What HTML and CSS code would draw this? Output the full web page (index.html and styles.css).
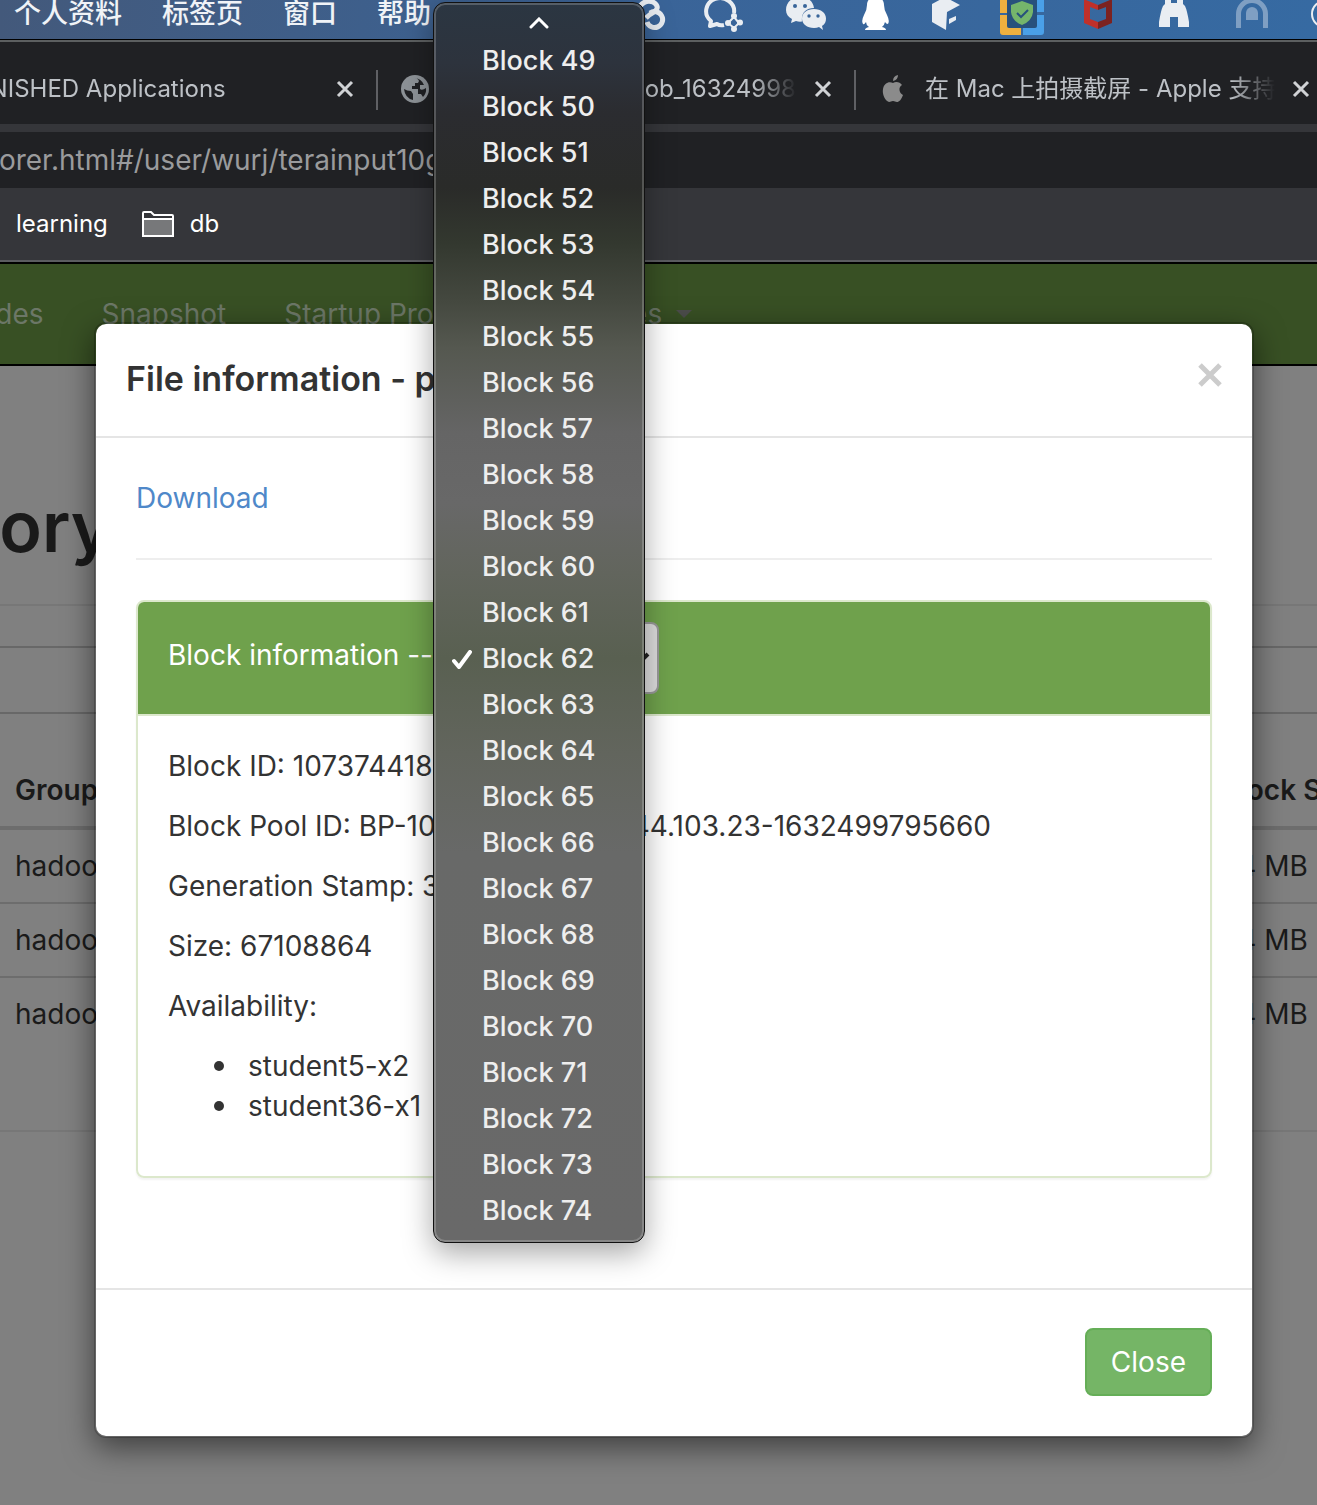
FILE: index.html
```html
<!DOCTYPE html>
<html lang="zh-CN">
<head>
<meta charset="utf-8">
<meta name="viewport" content="width=device-width, initial-scale=1">
<title>Browsing HDFS</title>
<link rel="stylesheet" href="styles.css">
</head>
<body>
<div class="screen">
  <header class="menubar">
    <nav class="menubar-menus">
      <span>个人资料</span><span>标签页</span><span>窗口</span><span>帮助</span>
    </nav>
    <div class="menubar-icons">
      <svg width="75" height="39" viewBox="612 0 75 39" fill="none" stroke="#e9edf2" stroke-width="5"><circle cx="633" cy="20" r="9"/><path d="M640 6Q646-1 653 2Q661 7 654 12Q650 14 646 18"/><path d="M650 13A8 8 0 1 1 647 22"/></svg>
      <svg width="78" height="39" viewBox="687 0 78 39" fill="none" stroke="#e9edf2"><path d="M734 13A14 13 0 1 0 711 21L710 26L717 24Q720 26 724 25" stroke-width="4" stroke-linejoin="round"/><path d="M734 17l5 6-5 5-6-5z" stroke-width="2"/><g fill="#e9edf2" stroke="none"><circle cx="734" cy="16" r="3"/><circle cx="740" cy="22.500" r="3"/><circle cx="734" cy="29" r="3"/><circle cx="728" cy="23" r="3"/></g></svg>
      <svg width="80" height="39" viewBox="765 0 80 39"><path d="M800 -3C791-3 786 3 786 10C786 14 788 17 792 19L791 23L796 21Q799 22 802 21.500C801 13 806 8 814 8C813 1 808-3 800-3z" fill="#e9edf2"/><path d="M814 9C807 9 802 13 802 18.500S807 28 814 28Q817 28 819 27L823 30L822 26C825 24 826 22 826 18.500C826 13 821 9 814 9z" fill="#e9edf2"/><g fill="#39659a"><circle cx="795" cy="6" r="2"/><circle cx="805" cy="6" r="2"/><circle cx="809" cy="16" r="1.700"/><circle cx="818" cy="16" r="1.700"/></g></svg>
      <svg width="66" height="39" viewBox="845 0 66 39"><path d="M867 5C867-6 884-6 884 5Q884 10 887 15Q890 21 888 24Q886 24 885 22Q884 26 882 27Q886 28 886 30H865Q865 28 869 27Q866 25 866 22Q864 25 863 24Q861 21 864 15Q867 10 867 5z" fill="#fff"/></svg>
      <svg width="69" height="39" viewBox="911 0 69 39" fill="#e9edf2"><path d="M932 4L945-3L960 5L947 12L946 30L932 22z"/><path d="M949 19L956 16V20L949 24z"/></svg>
      <svg width="80" height="39" viewBox="980 0 80 39"><rect x="1007" y="0" width="30" height="28" fill="#28517c"/><path d="M1000 0H1007V13H1000zM1000 15H1007V26Q1007 28 1009 28H1021V35H1003Q1000 35 1000 32z" fill="#eeb03f"/><path d="M1037 0H1044V12H1037zM1037 15H1044V32Q1044 35 1041 35H1023V28H1035Q1037 28 1037 26z" fill="#4aa0e8"/><path d="M1022 1L1033 5V12Q1032 21 1022 25Q1012 21 1011 12V5z" fill="#75b56b"/><path d="M1017 13L1021 17L1028 10" fill="none" stroke="#28517c" stroke-width="2"/></svg>
      <svg width="76" height="39" viewBox="1060 0 76 39"><path d="M1084 0H1086L1098 5V10L1090 7V19L1098 22V29L1084 23z" fill="#c0302a"/><path d="M1112 0H1110L1098 5V10L1106 7V19L1098 22V29L1112 23z" fill="#7c2220"/></svg>
      <svg width="76" height="39" viewBox="1136 0 76 39"><path d="M1165 0H1171V3H1177V0H1183V4L1185 6Q1187 10 1189 22V27H1178V17H1170V27H1159V22Q1161 10 1163 6L1165 4z" fill="#e9edf2"/></svg>
      <svg width="78" height="39" viewBox="1212 0 78 39"><path d="M1238.500 28V14A13 13 0 0 1 1265.500 14V28" fill="none" stroke="#7f9fc3" stroke-width="5"/><path d="M1246 20V13A6 6 0 0 1 1258 13V20z" fill="#7f9fc3"/></svg>
      <svg width="27" height="39" viewBox="1290 0 27 39"><circle cx="1325" cy="14" r="13" fill="none" stroke="#e9edf2" stroke-width="2"/></svg>
    </div>
  </header>

  <div class="tabstrip">
    <div class="tab">
      <span class="tab-icon"></span>
      <span class="tab-title">FINISHED Applications</span>
      <button class="tab-close" aria-label="Close tab"><svg width="24" height="24" viewBox="0 0 24 24"><path d="M5 5L19 19M19 5L5 19"/></svg></button>
    </div>
    <div class="tab">
      <span class="tab-icon"><svg width="28" height="28" viewBox="0 0 28 28"><circle cx="14" cy="14" r="14" fill="#8d9297"/><path d="M13 3Q17 3 18 6L17 8H14V11H11V14H17V19H20L22 22A11 11 0 0 0 25 13Q21 16 19 14V10H23Q20 3 13 3zM3 14Q6 16 10 16L12 19V25Q4 23 3 14z" fill="#202124"/></svg></span>
      <span class="tab-title">MapReduce Job job_163249981</span>
      <button class="tab-close" aria-label="Close tab"><svg width="24" height="24" viewBox="0 0 24 24"><path d="M5 5L19 19M19 5L5 19"/></svg></button>
    </div>
    <div class="tab">
      <span class="tab-icon"><svg width="28" height="28" viewBox="0 0 28 28" fill="#8b8b8b"><path d="M14 8C17 6 21 7 23 10C19 12 20 18 24 20C22 25 20 27 18 27C16 27 16 26 14 26S12 27 10 27C6 26 3 19 4 14C5 8 10 6 14 8zM14 6Q14 1 19 0Q19 5 14 6z"/></svg></span>
      <span class="tab-title">在 Mac 上拍摄截屏 - Apple 支持 (中国)</span>
      <button class="tab-close" aria-label="Close tab"><svg width="24" height="24" viewBox="0 0 24 24"><path d="M5 5L19 19M19 5L5 19"/></svg></button>
    </div>
  </div>

  <div class="toolbar">
    <input class="address" type="text" aria-label="Address" value="explorer.html#/user/wurj/terainput10g">
  </div>

  <div class="bookmarks">
    <a href="#learning">learning</a>
    <a href="#db"><svg width="32" height="26" viewBox="0 0 32 26"><path d="M1 24V2Q1 1 2 1H9L12 4H30Q31 4 31 5V24Q31 25 30 25H2Q1 25 1 24z" fill="#35363a" stroke="#fff" stroke-width="2"/><path d="M1 8H31V25H1z" fill="#77787a" stroke="#fff" stroke-width="2"/></svg>db</a>
  </div>

  <main class="page">
    <nav class="navbar">
      <a href="#datanodes">Datanodes</a>
      <a href="#snapshot">Snapshot</a>
      <a href="#startup">Startup Progress</a>
      <a href="#utilities">Utilities<span class="caret"></span></a>
    </nav>
    <h1 class="page-title"><span>Browse Directory</span></h1>
    <input class="path-input" type="text" aria-label="Directory">
    <table class="files">
      <thead><tr><th class="col-group">Group</th><th>Size</th><th>Replication</th><th class="col-block">Block Size</th></tr></thead>
      <tbody>
        <tr><td>hadoop</td><td></td><td></td><td>64 MB</td></tr>
        <tr><td>hadoop</td><td></td><td></td><td>64 MB</td></tr>
        <tr><td>hadoop</td><td></td><td></td><td>64 MB</td></tr>
      </tbody>
    </table>
    <hr class="page-rule">

    <section class="modal" role="dialog" aria-labelledby="modal-title">
      <header class="modal-header">
        <h4 id="modal-title">File information - part-m-000</h4>
        <button class="modal-x" aria-label="Dismiss"><svg width="24" height="24" viewBox="0 0 24 24"><path d="M2 2L22 22M22 2L2 22" stroke="#ccc" stroke-width="5"/></svg></button>
      </header>
      <div class="modal-body">
        <a class="download" href="#download">Download</a>
        <hr class="modal-rule">
        <div class="panel">
          <div class="panel-heading">
            <label for="block">Block information --</label>
            <span class="select-wrap">
              <select id="block"><option>Block 62</option></select>
              <svg width="18" height="12" viewBox="0 0 18 12"><path d="M2 2L9 9L16 2" fill="none" stroke="#222" stroke-width="4"/></svg>
            </span>
          </div>
          <div class="panel-body">
            <p>Block ID: 1073744182</p>
            <p>Block Pool ID: BP-1082421752-10.244.103.23-1632499795660</p>
            <p>Generation Stamp: 3358</p>
            <p>Size: 67108864</p>
            <p>Availability:</p>
            <ul><li>student5-x2</li><li>student36-x1</li></ul>
          </div>
        </div>
      </div>
      <footer class="modal-footer"><button class="btn">Close</button></footer>
    </section>
  </main>

  <div class="popup">
    <div class="popup-up"><svg width="20" height="12" viewBox="0 0 20 12"><path d="M2 10L10 2L18 10" fill="none" stroke="#fff" stroke-width="3" stroke-linecap="round"/></svg></div>
    <ul role="listbox" aria-label="Block">
      <li role="option">Block 49</li>
      <li role="option">Block 50</li>
      <li role="option">Block 51</li>
      <li role="option">Block 52</li>
      <li role="option">Block 53</li>
      <li role="option">Block 54</li>
      <li role="option">Block 55</li>
      <li role="option">Block 56</li>
      <li role="option">Block 57</li>
      <li role="option">Block 58</li>
      <li role="option">Block 59</li>
      <li role="option">Block 60</li>
      <li role="option">Block 61</li>
      <li role="option" aria-selected="true"><svg width="20" height="20" viewBox="0 0 20 20"><path d="M2 11L7 17L18 2" fill="none" stroke="#fff" stroke-width="4" stroke-linecap="round" stroke-linejoin="round"/></svg>Block 62</li>
      <li role="option">Block 63</li>
      <li role="option">Block 64</li>
      <li role="option">Block 65</li>
      <li role="option">Block 66</li>
      <li role="option">Block 67</li>
      <li role="option">Block 68</li>
      <li role="option">Block 69</li>
      <li role="option">Block 70</li>
      <li role="option">Block 71</li>
      <li role="option">Block 72</li>
      <li role="option">Block 73</li>
      <li role="option">Block 74</li>
    </ul>
  </div>
</div>
</body>
</html>
```
FILE: styles.css
```css
* { box-sizing: border-box; }

body {
  margin: 0;
  font-family: Inter, "Noto Sans CJK SC", sans-serif;
  font-size: 28px;
  line-height: 40px;
  color: #333;
}

a { color: inherit; text-decoration: none; }
button, input, select { font: inherit; }
svg { display: block; flex: none; }

.screen {
  position: relative;
  display: flex;
  flex-direction: column;
  min-height: 100vh;
  overflow: hidden;
}

/* System menu bar */
.menubar {
  display: flex;
  justify-content: space-between;
  height: 39px;
  padding-left: 14px;
  background: linear-gradient(90deg, #43597b, #3a6498 50%, #366aa2);
  overflow: hidden;
}
.menubar-menus {
  display: flex;
  gap: 40px;
  font-size: 27px;
  font-weight: 500;
  line-height: 28px;
  color: #f0f3f7;
  white-space: nowrap;
}
.menubar-icons { display: flex; }

/* Browser chrome */
.tabstrip {
  display: flex;
  height: 85px;
  padding-top: 12px;
  border-top: 1px solid #000;
  box-shadow: inset 0 2px #5c5f60;
  background: #202124;
}
.tab {
  display: flex;
  flex: none;
  align-items: center;
  gap: 18px;
  width: 478px;
  padding: 0 19px 0 25px;
  position: relative;
  height: 74px;
  color: #bdc1c6;
  font-size: 24px;
}
.tab:first-child { margin-left: -102px; }
.tab + .tab::before {
  content: "";
  position: absolute;
  left: 0;
  top: 18px;
  width: 2px;
  height: 40px;
  background: #5f6064;
}
.tab-icon { flex: none; width: 28px; height: 28px; }
.tab-title {
  flex: 1;
  overflow: hidden;
  white-space: nowrap;
  -webkit-mask-image: linear-gradient(90deg, #000 calc(100% - 44px), transparent);
  mask-image: linear-gradient(90deg, #000 calc(100% - 44px), transparent);
}
.tab-close {
  flex: none;
  width: 24px;
  height: 24px;
  margin-left: -4px;
  padding: 0;
  border: 0;
  background: none;
  stroke: #d0d2d5;
  stroke-width: 3;
}
.toolbar {
  padding-top: 8px;
  background: #35363a;
  overflow: hidden;
}
.address {
  display: block;
  width: 100%;
  height: 56px;
  margin: 0;
  padding: 0;
  border: 0;
  background: #202124;
  color: #9a9b9d;
  text-indent: -56px;
}
.bookmarks {
  display: flex;
  align-items: center;
  gap: 34px;
  height: 76px;
  padding: 0 16px 2px;
  border-bottom: 2px solid #000;
  box-shadow: inset 0 -2px #5b5c60;
  background: #35363a;
  color: #fff;
  font-size: 24px;
}
.bookmarks a { display: flex; align-items: center; gap: 16px; }

/* Dimmed page behind the dialog */
.page {
  position: relative;
  flex: 1;
  background: #808080;
  color: #1a1a1a;
}
.navbar {
  display: flex;
  gap: 58px;
  height: 102px;
  padding-top: 30px;
  border-bottom: 2px solid #000;
  background: #385024;
  color: #6c7767;
  white-space: nowrap;
}
.navbar a:first-child { margin-left: -99px; }
.navbar a { display: flex; align-items: center; height: 40px; }
.caret {
  margin-left: 14px;
  border: 8px solid transparent;
  border-top-color: #4c4d4b;
  border-bottom: 0;
}
.page-title {
  margin: 0 0 40px -500px;
  padding: 122px 0 38px;
  border-bottom: 2px solid #777;
  font-size: 70px;
  font-weight: 600;
  line-height: 78px;
}
.page-title span {
  display: block;
  width: 612px;
  text-align: right;
  white-space: nowrap;
}
.path-input {
  display: block;
  width: 100%;
  height: 68px;
  border: 2px solid #686868;
  border-width: 2px 0;
  background: #808080;
}
.files {
  width: calc(100% + 80px);
  table-layout: fixed;
  border-spacing: 0;
  text-align: left;
}
.files th {
  height: 116px;
  padding: 40px 15px 0;
  border-bottom: 4px solid #6d6d6d;
  font-weight: 600;
}
.files td { height: 74px; padding: 0 15px; }
.files tbody tr:first-child td { height: 72px; }
.files tbody tr + tr td { border-top: 2px solid #6d6d6d; }
.files .col-block { width: 191px; }
.page-rule { height: 2px; margin: 80px 0 0; border: 0; background: #777; }

/* Dialog */
.modal {
  position: absolute;
  top: 58px;
  left: 94px;
  right: 63px;
  border: 2px solid rgba(0, 0, 0, .2);
  border-radius: 12px;
  background: #fff;
  background-clip: padding-box;
  box-shadow: 0 10px 30px rgba(0, 0, 0, .5);
  color: #333;
}
.modal-header {
  display: flex;
  justify-content: space-between;
  height: 114px;
  padding: 30px;
  border-bottom: 2px solid #e5e5e5;
}
.modal-header h4 {
  margin: 0;
  font-size: 34px;
  font-weight: 600;
  line-height: 50px;
}
.modal-x {
  width: 24px;
  height: 42px;
  padding: 0;
  border: 0;
  background: none;
}
.modal-body { padding: 40px 40px 110px; }
.download { display: block; color: #4f88c9; }
.modal-rule { height: 2px; margin: 40px 0; border: 0; background: #eee; }
.panel {
  border: 2px solid #dce8cc;
  border-radius: 8px;
  box-shadow: 0 2px 2px rgba(0, 0, 0, .05);
}
.panel-heading {
  display: flex;
  align-items: center;
  gap: 16px;
  padding: 20px 30px;
  border-bottom: 2px solid #dce8cc;
  border-radius: 6px 6px 0 0;
  background: #6fa14c;
  color: #fff;
}
.panel-heading label { padding-bottom: 6px; }
.select-wrap { display: flex; align-items: center; }
.select-wrap select {
  appearance: none;
  width: 210px;
  height: 72px;
  padding: 0 30px;
  border: 2px solid #999;
  border-radius: 8px;
  background: #dedede;
  color: #222;
}
.select-wrap svg { margin-left: -27px; pointer-events: none; }
.panel-body { padding: 30px; }
.panel-body p { margin: 0 0 20px; white-space: nowrap; }
.panel-body ul { margin: 0 0 20px; padding-left: 46px; list-style: none; }
.panel-body li { display: flex; align-items: center; gap: 24px; }
.panel-body li::before {
  content: "";
  width: 10px;
  height: 10px;
  border-radius: 50%;
  background: #333;
}
.modal-footer {
  display: flex;
  justify-content: flex-end;
  padding: 38px 40px 40px;
  border-top: 2px solid #e5e5e5;
}
.btn {
  height: 68px;
  padding: 0 24px;
  border: 2px solid #65ae57;
  border-radius: 8px;
  background: #75b566;
  color: #fff;
}

/* Open drop-down menu */
.popup {
  position: absolute;
  top: 2px;
  left: 433px;
  width: 212px;
  padding: 2px 2px 8px;
  border: 1px solid #111;
  border-radius: 12px;
  box-shadow: inset 0 0 0 2px rgba(255, 255, 255, .2), 0 10px 30px rgba(0, 0, 0, .35);
  background: linear-gradient(#2b3642, #2d333d 60px, #2b2c30 110px, #2a2b29 185px, #33382f 240px, #454940 300px, #555850 345px, #656565 430px, #686868 500px, #62655d 570px, #596051 655px, #62655d 750px, #686968 850px, #696969);
  color: #eee;
  font-weight: 500;
}
.popup-up { display: flex; align-items: center; justify-content: center; height: 33px; padding-top: 2px; }
.popup ul { margin: 0; padding: 0; list-style: none; font-size: 27px; }
.popup li {
  position: relative;
  padding-left: 46px;
  line-height: 46px;
}
.popup li svg { position: absolute; left: 16px; top: 14px; }
```
